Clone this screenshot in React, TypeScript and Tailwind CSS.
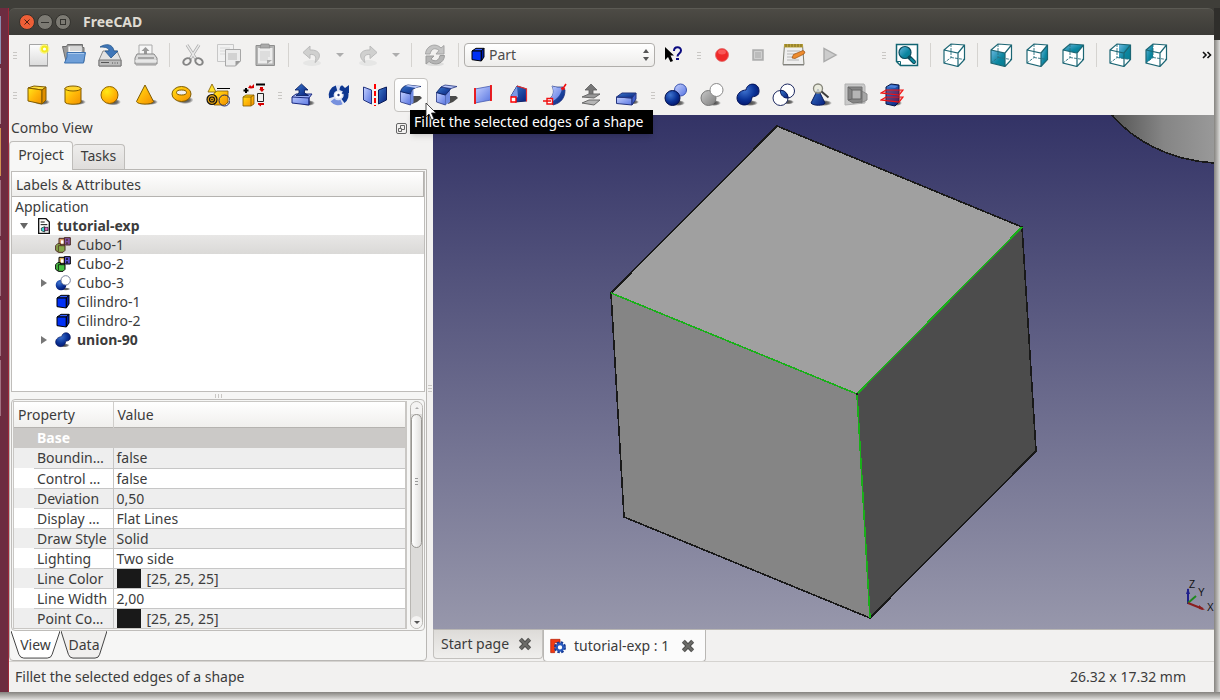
import type { ReactNode } from "react";
import clsx from "clsx";

interface IconProps {
  children: ReactNode;
  size?: "sm" | "md";
}

function Icon({ children, size = "md" }: IconProps) {
  return (
    <svg
      viewBox="0 0 24 24"
      aria-hidden="true"
      className={clsx("block shrink-0", size === "sm" ? "h-4 w-4" : "h-6 w-6")}
    >
      {children}
    </svg>
  );
}

// Gradients shared by every icon on the page
function IconDefs() {
  return (
    <svg className="absolute h-0 w-0" aria-hidden="true">
      <defs>
        <linearGradient id="gold" x1="0" y1="0" x2="1" y2="1">
          <stop offset="0" stopColor="#ffe81a" />
          <stop offset="0.5" stopColor="#ffb608" />
          <stop offset="1" stopColor="#f09000" />
        </linearGradient>
        <radialGradient id="goldBall" cx="0.35" cy="0.3" r="0.7">
          <stop offset="0" stopColor="#ffe916" />
          <stop offset="1" stopColor="#ffa000" />
        </radialGradient>
        <radialGradient id="blueBall" cx="0.35" cy="0.3" r="0.75">
          <stop offset="0" stopColor="#3f74d0" />
          <stop offset="0.6" stopColor="#0b3397" />
          <stop offset="1" stopColor="#03146a" />
        </radialGradient>
        <linearGradient id="blueDark" x1="0" y1="0" x2="1" y2="1">
          <stop offset="0" stopColor="#3a78cc" />
          <stop offset="1" stopColor="#061f7d" />
        </linearGradient>
        <linearGradient id="blueLight" x1="0" y1="0" x2="1" y2="1">
          <stop offset="0" stopColor="#c6d2ff" />
          <stop offset="1" stopColor="#5673e0" />
        </linearGradient>
        <linearGradient id="teal" x1="0" y1="0" x2="1" y2="1">
          <stop offset="0" stopColor="#6cb8e0" />
          <stop offset="0.6" stopColor="#0b86a0" />
          <stop offset="1" stopColor="#087c90" />
        </linearGradient>
        <linearGradient id="paper" x1="0" y1="0" x2="0" y2="1">
          <stop offset="0" stopColor="#fdfdfd" />
          <stop offset="1" stopColor="#dcdcdc" />
        </linearGradient>
        <linearGradient id="grey" x1="0" y1="0" x2="1" y2="1">
          <stop offset="0" stopColor="#c8c8c8" />
          <stop offset="1" stopColor="#7d7d7d" />
        </linearGradient>
        <radialGradient id="shade">
          <stop offset="0" stopColor="#222" stopOpacity="0.85" />
          <stop offset="0.6" stopColor="#222" stopOpacity="0.6" />
          <stop offset="1" stopColor="#222" stopOpacity="0" />
        </radialGradient>
        <linearGradient id="sky" x1="0" y1="0" x2="0" y2="1">
          <stop offset="0" stopColor="#333366" />
          <stop offset="1" stopColor="#9797ab" />
        </linearGradient>
        <linearGradient id="cylinder" gradientUnits="userSpaceOnUse" x1="680" y1="0" x2="781" y2="0">
          <stop offset="0" stopColor="#555" />
          <stop offset="0.5" stopColor="#858585" />
          <stop offset="1" stopColor="#999" />
        </linearGradient>
      </defs>
    </svg>
  );
}

/* ─── Standard file / edit icons ─── */

const newIcon = (
  <Icon>
    <path d="M3.5 1.5h18v21h-18z" fill="url(#paper)" stroke="#a5a5a5" />
    <path d="M3 23h19" stroke="#888" />
    <circle cx="18.5" cy="6" r="5" fill="#fff64a" opacity="0.6" />
    <circle cx="18.5" cy="6" r="3.4" fill="#f3ea1c" />
    <circle cx="18.5" cy="6" r="1.6" fill="#fffff0" />
  </Icon>
);

const openIcon = (
  <Icon>
    <path d="M.5 3.5h4l1-2h15v3H22v14H4z" fill="#9a9a9a" stroke="#6d6d6d" />
    <path d="M6 3h14v8H6z" fill="#f5f5f5" stroke="#999" strokeWidth="0.7" />
    <path d="M8 5h11M8 7h11" stroke="#aaa" strokeWidth="0.8" />
    <path d="M5 9.500h18.500l-2 10.500H2.500L5 14z" fill="#6f9fd8" stroke="#3c70ae" />
    <path d="M6 10.500h16" stroke="#a8c8ec" />
  </Icon>
);

const saveIcon = (
  <Icon>
    <path d="M5 8h14l4 9v6H1v-6z" fill="#e2e2e2" stroke="#8a8a8a" />
    <path d="M1 17h22v6H1z" fill="#bcbcbc" stroke="#777" />
    <path d="M3 19.500h8M14 20h1m1.500 0h1m1.500 0h1" stroke="#555" />
    <path d="M2 4C8 0 15 1 16 8h4l-7 7-6-7h4C11 5 8 4 2 4z" fill="#3f76b8" stroke="#27598f" strokeWidth="0.8" />
  </Icon>
);

const printIcon = (
  <Icon>
    <path d="M5 2h13v11H5z" fill="#f6f6f6" stroke="#aaa" />
    <path d="M11.500 4l4 4h-2.500v4h-3V8H7.500z" fill="#999" />
    <path d="M3 11h17l3 4v6H1v-6z" fill="#d9d9d9" stroke="#878787" />
    <path d="M4 14h16v2H4z" fill="#a5a5a5" />
    <path d="M1 18h22" stroke="#f6f6f6" />
    <path d="M2 22h20" stroke="#999" />
  </Icon>
);

const cutIcon = (
  <Icon>
    <path d="M6 2l9 14M18 2L9 16" stroke="#aaa" strokeWidth="3" />
    <path d="M6 2l9 14M18 2L9 16" stroke="#e9e9e9" strokeWidth="1.4" />
    <ellipse cx="6" cy="18.500" rx="4" ry="3" fill="none" stroke="#858585" strokeWidth="2" transform="rotate(-35 6 18.500)" />
    <ellipse cx="18" cy="18.500" rx="4" ry="3" fill="none" stroke="#858585" strokeWidth="2" transform="rotate(35 18 18.500)" />
  </Icon>
);

const copyIcon = (
  <Icon>
    <path d="M.5 1.500h16v17H.5z" fill="#f1f1f1" stroke="#c7c7c7" />
    <path d="M3 5h10M3 8h10M3 11h5" stroke="#d9d9d9" />
    <path d="M8.500 6.500h15V18l-5 5h-10z" fill="#ececec" stroke="#a7a7a7" />
    <path d="M11 10h9v7h-9z" fill="#d2d2d2" />
    <path d="M18.500 23v-5h5z" fill="#999" />
  </Icon>
);

const pasteIcon = (
  <Icon>
    <path d="M3 2.500h18.500v20H3z" fill="#b4b4b4" stroke="#8f8f8f" />
    <path d="M5 5h14.500v15.500H5z" fill="#ececec" />
    <path d="M8 1h8l1 4H7z" fill="#aaa" stroke="#888" strokeWidth="0.7" />
    <path d="M7 9h10M7 11h10M7 13h10M7 15h8M7 17h8" stroke="#cecece" />
    <path d="M14 21v-4h5z" fill="#aaa" />
  </Icon>
);

const undoIcon = (
  <Icon>
    <ellipse cx="12" cy="20" rx="9" ry="3" fill="#e6e6e5" />
    <path d="M10 3L3 9.500l7 6v-4c5-.5 7 2 5 8 7-5 6-13-5-12.500z" fill="#d0d0cf" stroke="#bbb" />
  </Icon>
);

const redoIcon = (
  <Icon>
    <ellipse cx="12" cy="20" rx="9" ry="3" fill="#e6e6e5" />
    <path d="M14 3l7 6.500-7 6v-4c-5-.5-7 2-5 8C2 14.500 3 6.500 14 7z" fill="#d0d0cf" stroke="#bbb" />
  </Icon>
);

const refreshIcon = (
  <Icon>
    <ellipse cx="12" cy="21" rx="9" ry="2" fill="#dededd" />
    <path d="M2.500 11C3 3 12-1 18 5l3-2.500V11h-8l3-3.500C12 4 8 6 7 11z" fill="#c4c4c4" stroke="#a5a5a5" />
    <path d="M21.500 12.500c-.5 8-9 11-15.500 6l-3 2.500v-8h8l-3 3c4 3.500 8 1.500 9-3.500z" fill="#b5b5b5" stroke="#9c9c9c" />
  </Icon>
);

const whatsThisIcon = (
  <Icon>
    <path d="M4 4v13l3-3 2.500 5 2.500-1-2.500-5.500H13z" fill="#000" />
    <path d="M13 8c0-5 7-5 7-.5 0 3-3.500 3-3.500 6M15 16h3" fill="none" stroke="#0b0b80" strokeWidth="2" />
  </Icon>
);

const recordIcon = (
  <Icon>
    <circle cx="12" cy="12" r="6.500" fill="#ef2929" stroke="#e06a6a" strokeWidth="0.8" />
    <ellipse cx="12" cy="9" rx="4" ry="2.500" fill="#ff6b6b" opacity="0.7" />
  </Icon>
);

const stopIcon = (
  <Icon>
    <path d="M7 7h10v10H7z" fill="#b9b9b9" stroke="#adadad" strokeWidth="1.500" />
    <path d="M8.500 8.500h7v7h-7z" fill="#bcbcbc" stroke="#d0d0d0" />
  </Icon>
);

const macroIcon = (
  <Icon>
    <path d="M2.500 2h18l1.500 19.500H1z" fill="#efefef" stroke="#7c7c70" />
    <path d="M2 1h19v3.500H2z" fill="#b9a23c" />
    <path d="M4 1v3m3-3v3m3-3v3m3-3v3m3-3v3m3-3v3" stroke="#6f5d15" strokeWidth="0.8" />
    <path d="M5 8h13M5 11h9M5 14h7M5 17h12" stroke="#b5b5b5" />
    <path d="M10 15l1.500-3.500L21 7.500l2 1.500-1 2-9 4.500z" fill="#ee8b2d" stroke="#985013" strokeWidth="0.7" />
    <path d="M1 22h21" stroke="#888" />
  </Icon>
);

const playIcon = (
  <Icon>
    <path d="M6 5.500v13L18 12z" fill="#ccc" stroke="#aaa" strokeWidth="1.400" />
  </Icon>
);

const fitIcon = (
  <Icon>
    <path d="M1.500 1.500h21v21h-17l-4-4z" fill="#fff" stroke="#126673" strokeWidth="1.500" />
    <path d="M1.500 18.500h4v4" fill="none" stroke="#126673" />
    <circle cx="10" cy="9.500" r="6" fill="url(#teal)" stroke="#0b4c5c" strokeWidth="1.200" />
    <path d="M14.500 14.500l4.500 4.500" stroke="#0b4c5c" strokeWidth="4" strokeLinecap="round" />
    <path d="M16 16l3 3" stroke="#0f8ca0" strokeWidth="2" strokeLinecap="round" />
  </Icon>
);

const CUBE_FACES = {
  none: "",
  front: "M2 7l14 3v13.500L2 20z",
  right: "M16 10l6.500-8v14.500L16 23.500z",
  top: "M2 7l7-6 13.500 1L16 10z",
  rear: "M11 1l11.500 1v14.500L11 15z",
  left: "M2 7l7-6v13.500L2 20z",
};

function ViewCube({ face }: { face: keyof typeof CUBE_FACES }) {
  return (
    <Icon>
      <path d="M2 7l7-6 13.500 1v14.500L16 23.500 2 20z" fill="#fff" />
      <path d={CUBE_FACES[face]} fill="url(#teal)" />
      <path d="M9 1v13.500L2 20M9 14.500l13.500 2" fill="none" stroke="#2b7180" strokeWidth="0.900" strokeDasharray="3 1" />
      <path d="M2 7l7-6 13.500 1v14.500L16 23.500 2 20zM2 7l14 3 6.500-8M16 10v13.500" fill="none" stroke="#1c6674" strokeWidth="1.200" />
    </Icon>
  );
}

/* ─── Part workbench icons ─── */

const boxIcon = (
  <Icon>
    <ellipse cx="16" cy="19" rx="8" ry="3" fill="url(#shade)" />
    <path d="M2 5l6-2 12 1-4 3z" fill="#ffdc3a" stroke="#805b00" />
    <path d="M2 5l14 2v14L2 18z" fill="url(#gold)" stroke="#805b00" />
    <path d="M16 7l4-3v13l-4 4z" fill="#e08f00" stroke="#805b00" />
  </Icon>
);

const cylinderIcon = (
  <Icon>
    <ellipse cx="16" cy="19" rx="8" ry="3" fill="url(#shade)" />
    <path d="M3 5v14c0 3 16 3 16 0V5" fill="url(#gold)" stroke="#805b00" />
    <ellipse cx="11" cy="5.500" rx="8" ry="2.500" fill="#ffd52e" stroke="#805b00" />
  </Icon>
);

const sphereIcon = (
  <Icon>
    <ellipse cx="15" cy="19" rx="8" ry="3.500" fill="url(#shade)" />
    <circle cx="11.500" cy="12" r="8.500" fill="url(#goldBall)" stroke="#906500" />
  </Icon>
);

const coneIcon = (
  <Icon>
    <ellipse cx="16" cy="19" rx="8" ry="3" fill="url(#shade)" />
    <path d="M11 2L2.500 18.500c1 3.500 16 3.500 17 0z" fill="url(#gold)" stroke="#805b00" />
  </Icon>
);

const torusIcon = (
  <Icon>
    <ellipse cx="15" cy="17" rx="8.500" ry="4" fill="url(#shade)" />
    <ellipse cx="11.500" cy="11" rx="9.500" ry="7.500" fill="url(#gold)" stroke="#805b00" />
    <ellipse cx="11.500" cy="9.500" rx="5" ry="2.500" fill="#f2f1f0" stroke="#805b00" />
  </Icon>
);

const primitivesIcon = (
  <Icon>
    <ellipse cx="18" cy="19" rx="6" ry="3" fill="url(#shade)" />
    <path d="M11 5.500h13" stroke="#000" />
    <path d="M8 10l3-2h11v11l-3 3H8z" fill="url(#gold)" stroke="#805b00" strokeWidth="0.800" />
    <path d="M6 1L2 9h8z" fill="#ffe02a" stroke="#805b00" strokeWidth="0.800" />
    <circle cx="6" cy="16.500" r="5" fill="#e0a010" stroke="#111" strokeWidth="1.200" />
    <circle cx="6" cy="16.500" r="2.500" fill="none" stroke="#111" strokeWidth="1.200" />
    <circle cx="6" cy="16.500" r="0.800" fill="#111" />
    <circle cx="18.500" cy="17.500" r="5.500" fill="none" stroke="#1d2466" />
  </Icon>
);

const shapeBuilderIcon = (
  <Icon>
    <path d="M1 14l3-2h8v9l-3 2H1z" fill="url(#gold)" stroke="#805b00" strokeWidth="0.800" />
    <path d="M1 14h8v9M9 14l3-2" fill="none" stroke="#805b00" strokeWidth="0.800" />
    <path d="M4 5v5M1.500 7.500h5" stroke="#000" strokeWidth="2" />
    <path d="M14 1.500h9" stroke="#000" strokeWidth="2" />
    <path d="M6 5l2-3 1.500 1.500L12 1v4l-3 .5zM18 4h3v2h1.500L20 9l-3-3h1zM16 20h6v2h-3v1.500l-3-2z" fill="#d90000" />
    <path d="M15.500 10.500h6v8h-6z" fill="none" stroke="#222" />
  </Icon>
);

const extrudeIcon = (
  <Icon>
    <ellipse cx="17" cy="20" rx="7" ry="3" fill="url(#shade)" />
    <path d="M1 14l4-3h16l-3 4v7L1 20z" fill="url(#blueLight)" stroke="#1b2a80" />
    <path d="M1 14l17 1v7" fill="none" stroke="#1b2a80" />
    <path d="M10.500 1L17 7h-3.500v3l4 2.500H5L8 10V7H4z" fill="url(#blueDark)" stroke="#061a5c" strokeWidth="0.800" />
  </Icon>
);

const revolveIcon = (
  <Icon>
    <circle cx="11.500" cy="12" r="10" fill="#dfe4f4" />
    <path d="M4.500 14.500A7.500 7.500 0 0 1 9.500 5" fill="none" stroke="#0e3790" strokeWidth="5" />
    <path d="M18.500 9A7.500 7.500 0 0 1 16 18" fill="none" stroke="#0e3790" strokeWidth="5" />
    <path d="M5.500 17a7.500 7.500 0 0 0 9 2" fill="none" stroke="#7791de" strokeWidth="5" />
    <path d="M12.500 7c0-3 1.500-5 3-4.500L18 5l4-3v8l-8 1 2-2.500z" fill="#0e3790" />
    <circle cx="11.500" cy="12" r="3.500" fill="#fff" />
    <circle cx="11.500" cy="12" r="1.200" fill="#26377c" />
  </Icon>
);

const mirrorIcon = (
  <Icon>
    <path d="M.500 4l8 3v14l-8-4z" fill="url(#blueLight)" stroke="#23347f" />
    <path d="M23.500 4l-8 3v14l8-4z" fill="url(#blueDark)" stroke="#0b1c58" />
    <path d="M12 1v22" stroke="#f00" strokeWidth="2" strokeDasharray="5 2" />
  </Icon>
);

const filletIcon = (
  <Icon>
    <path d="M14 13h7l2 2-5 4-5 2z" fill="#4a4a4a" />
    <path d="M1.500 8.500l10 2.500v11l-10-3z" fill="url(#blueLight)" stroke="#23347f" strokeWidth="0.800" />
    <path d="M11.500 11c0-2 1-3 3-4v12.500l-3 2.500z" fill="#6f8ae2" />
    <path d="M1.500 8.500C2.500 5 5 2.500 9 2l13 1.500c-6 .5-10 3-10.500 7.500z" fill="url(#blueDark)" stroke="#061a5c" strokeWidth="0.800" />
    <path d="M9 2l13 1.500c-2.500.3-4 .8-5.500 1.500L6 3z" fill="#b9c8fa" />
  </Icon>
);

const chamferIcon = (
  <Icon>
    <path d="M14 13h7l2 2-5 4-5 2z" fill="#4a4a4a" />
    <path d="M1.500 9.500l9 2.500v10l-9-3z" fill="url(#blueLight)" stroke="#23347f" strokeWidth="0.800" />
    <path d="M10.500 12L15 6v13l-4.500 3z" fill="#6f8ae2" />
    <path d="M1.500 9.500L6 4l10 1.500L10.500 12z" fill="url(#blueDark)" stroke="#061a5c" strokeWidth="0.800" />
    <path d="M6 4l4-2 12 1.500-6 2z" fill="#b9c8fa" stroke="#23347f" strokeWidth="0.800" />
  </Icon>
);

const ruledIcon = (
  <Icon>
    <path d="M4 6l16-3v14L4 20z" fill="url(#blueLight)" stroke="#4459b0" strokeWidth="0.800" />
    <path d="M4 5v16M20 2v16" stroke="#f01010" strokeWidth="1.800" />
  </Icon>
);

const loftIcon = (
  <Icon>
    <path d="M4 13L10 3l9.500 3v12L8 19z" fill="url(#blueDark)" stroke="#13236b" />
    <path d="M4 13L10 3l1 11-2 1z" fill="#7b98e6" />
    <path d="M10 3l9.500 3v12.500" fill="none" stroke="#e63030" strokeWidth="1.200" />
    <path d="M4 14h5v5H4z" fill="#fff" stroke="#f00" strokeWidth="1.400" />
  </Icon>
);

const sweepIcon = (
  <Icon>
    <path d="M9 3c4 1.500 8 1 11 1l2 3c0 8-4 13-12 15l-5-5c5-3 7-8 4-14z" fill="url(#blueDark)" stroke="#23347f" strokeWidth="0.800" />
    <path d="M9 3c4 1.500 7 2 10 1 0 6-4 12-11 15l-3-2c5-3 7-8 4-14z" fill="url(#blueLight)" />
    <path d="M4 15.500h5.500V21H4z" fill="#fff" stroke="#f01010" strokeWidth="1.400" />
    <path d="M0 18h8M19 7l2-3 2-3M18 5l4 1" fill="none" stroke="#f01010" strokeWidth="1.600" />
  </Icon>
);

const offsetIcon = (
  <Icon>
    <path d="M12 1l6 6h-4v6h-4V7H6z" fill="#777" stroke="#5d5d5d" strokeWidth="0.800" />
    <path d="M3 14l7-3h11l-6 4z" fill="#999" stroke="#696969" />
    <path d="M3 20l7-3h11l-6 5z" fill="#b5b5b5" stroke="#696969" />
  </Icon>
);

const thicknessIcon = (
  <Icon>
    <ellipse cx="18" cy="19" rx="6" ry="2.500" fill="url(#shade)" />
    <path d="M1.500 14l15.500 1v7L1.500 20.500z" fill="url(#blueLight)" stroke="#23347f" />
    <path d="M1.500 14L7 10h14l-4 5z" fill="url(#blueDark)" stroke="#23347f" />
    <path d="M21 10v6l-4 6v-7z" fill="#4260cc" stroke="#23347f" />
  </Icon>
);

const booleanIcon = (
  <Icon>
    <ellipse cx="14" cy="20" rx="7" ry="3" fill="url(#shade)" />
    <circle cx="16.500" cy="7" r="6" fill="url(#blueLight)" stroke="#3b54b0" />
    <circle cx="8.500" cy="15" r="7.500" fill="url(#blueBall)" stroke="#03104d" />
  </Icon>
);

const booleanCutIcon = (
  <Icon>
    <ellipse cx="14" cy="20" rx="7" ry="3" fill="url(#shade)" />
    <circle cx="8.500" cy="15" r="7.500" fill="url(#grey)" stroke="#777" />
    <circle cx="16.500" cy="7" r="6.500" fill="#fff" stroke="#8a8a8a" />
  </Icon>
);

const unionShape = (
  <>
    <ellipse cx="14" cy="20" rx="8" ry="3" fill="url(#shade)" />
    <path d="M10 7C11-1 23-1 23 8c0 4-2 5-7 6-.500 11-15 10-15 1 0-5 5-8 9-8z" fill="url(#blueBall)" stroke="#04145a" />
  </>
);

const unionIcon = <Icon>{unionShape}</Icon>;

const commonIcon = (
  <Icon>
    <ellipse cx="16" cy="19" rx="6" ry="2.500" fill="url(#shade)" />
    <circle cx="15.500" cy="8" r="7" fill="#fff" stroke="#1c2860" />
    <circle cx="8.500" cy="15" r="7.500" fill="#fff" stroke="#1c2860" />
    <path d="M8.500 7.500c4-.500 7.500 3 7.500 7.500-4 .500-8-3-7.500-7.500z" fill="url(#blueDark)" stroke="#0b1a60" />
  </Icon>
);

const checkGeometryIcon = (
  <Icon>
    <ellipse cx="16" cy="20" rx="8" ry="3" fill="url(#shade)" />
    <path d="M10 6L3 20c2 3 13 3 14 0z" fill="url(#blueDark)" stroke="#071a5a" />
    <circle cx="10" cy="5.500" r="4.500" fill="#e6e8d8" fillOpacity="0.800" stroke="#86867a" strokeWidth="1.300" />
    <path d="M13.500 8.500l7 6" stroke="#3d3d3d" strokeWidth="2" />
  </Icon>
);

const sectionIcon = (
  <Icon>
    <path d="M1 1h19l1 2v17L1 22z" fill="#c9c9c9" stroke="#b0b0b0" />
    <path d="M16 7l7 4v6l-6 3z" fill="#a5a5a5" stroke="#8a8a8a" />
    <path d="M4 4h14v15l-9 1-5-3z" fill="#858585" stroke="#707070" />
    <path d="M8 7h9v9H8z" fill="#b5b5b5" stroke="#666" />
    <path d="M4 4l4 3M4 17l4-1" stroke="#666" />
  </Icon>
);

const crossSectionsIcon = (
  <Icon>
    <ellipse cx="16" cy="20" rx="6" ry="3" fill="url(#shade)" />
    <path d="M6 4l5-3 8 1v17l-4 4-9-2z" fill="url(#blueDark)" stroke="#071545" />
    <path d="M1 10l5-3h17l-4 5zM1 17l5-3h17l-4 5z" fill="#e01515" fillOpacity="0.350" stroke="#f21212" strokeWidth="1.200" />
    <path d="M7 4l4-2 7 1-3 2z" fill="#4a7fd8" />
  </Icon>
);

/* ─── Tree and tab icons ─── */

const solidCube = (
  <>
    <path d="M3 6l6-4h12l-4 4z" fill="#3460ff" stroke="#000" strokeWidth="1.500" />
    <path d="M3 6h14v15L3 19z" fill="#0030f5" stroke="#000" strokeWidth="1.500" />
    <path d="M17 6l4-4v13l-4 6z" fill="#001fa8" stroke="#000" strokeWidth="1.500" />
  </>
);

const documentIcon = (
  <Icon size="sm">
    <path d="M4 1h11l5 5v17H4z" fill="#fff" stroke="#111" strokeWidth="2" />
    <path d="M7 6h6M7 10h10" stroke="#111" strokeWidth="1.500" />
    <path d="M8 15l5-2v8l-5-2z" fill="#40d8d8" stroke="#111" />
    <path d="M13 14h5v5h-5z" fill="#d860c8" stroke="#111" />
  </Icon>
);

function MeshIcon({ selected }: { selected?: boolean }) {
  const [green, orange, violet, line] = selected
    ? ["#86a94a", "#dd9560", "#8252a0", "#4b2a20"]
    : ["#49c244", "#e3b35c", "#5a50d0", "#000"];
  return (
    <Icon size="sm">
      <path d="M6 2h9v9H6z" fill={orange} stroke={line} strokeWidth="1.500" />
      <path d="M9 5h4v5H9z" fill="#fff" />
      <path d="M1 13l3-3h4l1 3h6v7l-3 3H5l-4-3z" fill={green} stroke={line} strokeWidth="1.500" />
      <path d="M5 13v9M5 13h4" stroke={line} strokeWidth="1.200" />
      <path d="M14 1h9v11h-9z" fill={violet} stroke={line} strokeWidth="1.500" />
      <path d="M18 3v3m0 2v3" stroke={line} strokeWidth="2" />
    </Icon>
  );
}

const smallCut = (
  <Icon size="sm">
    <ellipse cx="16" cy="21" rx="7" ry="2.500" fill="url(#shade)" />
    <circle cx="9" cy="15" r="8" fill="url(#blueBall)" />
    <circle cx="16" cy="8" r="7" fill="#fff" stroke="#77809c" strokeWidth="1.500" />
  </Icon>
);

const freecadIcon = (
  <Icon size="sm">
    <path d="M1 2h14v5H7v3h5v4H7v8H1z" fill="#f03a12" stroke="#b01c06" />
    <circle cx="15" cy="14" r="7" fill="none" stroke="#153a94" strokeWidth="4" strokeDasharray="3.500 2" />
    <circle cx="15" cy="14" r="5" fill="#fff" stroke="#2758bd" strokeWidth="3.500" />
  </Icon>
);

/* ─── Toolbars ─── */

interface Tool {
  label: string;
  icon: ReactNode;
}

const FILE_TOOLS: Tool[] = [
  { label: "New", icon: newIcon },
  { label: "Open", icon: openIcon },
  { label: "Save", icon: saveIcon },
  { label: "Print", icon: printIcon },
];

const EDIT_TOOLS: Tool[] = [
  { label: "Cut", icon: cutIcon },
  { label: "Copy", icon: copyIcon },
  { label: "Paste", icon: pasteIcon },
];

const MACRO_TOOLS: Tool[] = [
  { label: "Record macro", icon: recordIcon },
  { label: "Stop recording", icon: stopIcon },
  { label: "Macros", icon: macroIcon },
  { label: "Execute macro", icon: playIcon },
];

const VIEW_TOOLS: Tool[] = [
  { label: "Front view", icon: <ViewCube face="front" /> },
  { label: "Right view", icon: <ViewCube face="right" /> },
  { label: "Top view", icon: <ViewCube face="top" /> },
];

const REAR_VIEW_TOOLS: Tool[] = [
  { label: "Rear view", icon: <ViewCube face="rear" /> },
  { label: "Left view", icon: <ViewCube face="left" /> },
];

const SOLID_TOOLS: Tool[] = [
  { label: "Box", icon: boxIcon },
  { label: "Cylinder", icon: cylinderIcon },
  { label: "Sphere", icon: sphereIcon },
  { label: "Cone", icon: coneIcon },
  { label: "Torus", icon: torusIcon },
  { label: "Create primitives", icon: primitivesIcon },
  { label: "Shape builder", icon: shapeBuilderIcon },
];

const SWEEP_TOOLS: Tool[] = [
  { label: "Extrude", icon: extrudeIcon },
  { label: "Revolve", icon: revolveIcon },
  { label: "Mirror", icon: mirrorIcon },
];

const SURFACE_TOOLS: Tool[] = [
  { label: "Chamfer", icon: chamferIcon },
  { label: "Ruled surface", icon: ruledIcon },
  { label: "Loft", icon: loftIcon },
  { label: "Sweep", icon: sweepIcon },
  { label: "Offset", icon: offsetIcon },
  { label: "Thickness", icon: thicknessIcon },
];

const BOOLEAN_TOOLS: Tool[] = [
  { label: "Boolean", icon: booleanIcon },
  { label: "Cut shapes", icon: booleanCutIcon },
  { label: "Union", icon: unionIcon },
  { label: "Intersection", icon: commonIcon },
  { label: "Check geometry", icon: checkGeometryIcon },
  { label: "Section", icon: sectionIcon },
  { label: "Cross-sections", icon: crossSectionsIcon },
];

function Tools({ items }: { items: Tool[] }) {
  return (
    <>
      {items.map((t) => (
        <button key={t.label} aria-label={t.label} className="flex h-9 w-9 shrink-0 items-center justify-center">
          {t.icon}
        </button>
      ))}
    </>
  );
}

function Grip({ className }: { className?: string }) {
  return (
    <div className={clsx("flex w-[11px] shrink-0 flex-col items-center gap-0.5", className)}>
      <span className="h-px w-1 bg-[#c9c7c4]" />
      <span className="h-px w-1 bg-[#c9c7c4]" />
      <span className="h-px w-1 bg-[#c9c7c4]" />
    </div>
  );
}

function Separator() {
  return <div className="mx-[5px] h-6 w-px shrink-0 bg-[#d5d3d0]" />;
}

function DropArrow({ label }: { label: string }) {
  return (
    <button aria-label={label} className="flex h-9 w-5 shrink-0 items-center justify-center">
      <span className="border-x-4 border-t-4 border-x-transparent border-t-[#adadad]" />
    </button>
  );
}

function StandardToolbar() {
  return (
    <div className="flex h-10 items-center">
      <Grip />
      <Tools items={FILE_TOOLS} />
      <Separator />
      <Tools items={EDIT_TOOLS} />
      <Separator />
      <Tools items={[{ label: "Undo", icon: undoIcon }]} />
      <DropArrow label="Undo history" />
      <Tools items={[{ label: "Redo", icon: redoIcon }]} />
      <DropArrow label="Redo history" />
      <Separator />
      <Tools items={[{ label: "Refresh", icon: refreshIcon }]} />
      <Separator />
      <div className="relative w-[191px] shrink-0">
        <select
          aria-label="Workbench"
          className="block h-6 w-full appearance-none rounded border border-[#b0aeab] bg-linear-to-b from-white to-[#eeedeb] pl-6 text-sm leading-4 text-[#4c4c4c]"
        >
          <option>Part</option>
        </select>
        <span className="pointer-events-none absolute top-1 left-1.5">
          <Icon size="sm">{solidCube}</Icon>
        </span>
        <span className="pointer-events-none absolute top-1.5 right-1.5 flex flex-col gap-1">
          <span className="border-x-3 border-b-4 border-x-transparent border-b-[#555]" />
          <span className="border-x-3 border-t-4 border-x-transparent border-t-[#555]" />
        </span>
      </div>
      <Tools items={[{ label: "What's this?", icon: whatsThisIcon }]} />
      <Grip className="ml-0.5" />
      <Tools items={MACRO_TOOLS} />
      <Grip className="ml-[30px]" />
      <Tools items={[{ label: "Fit all", icon: fitIcon }]} />
      <Separator />
      <Tools items={[{ label: "Axonometric view", icon: <ViewCube face="none" /> }]} />
      <Separator />
      <Tools items={VIEW_TOOLS} />
      <Separator />
      <Tools items={REAR_VIEW_TOOLS} />
      <button aria-label="More tools" className="mr-0.5 ml-auto">
        <svg viewBox="0 0 10 8" className="h-2 w-2.5" fill="none" stroke="#111" strokeWidth="1.600" aria-hidden="true">
          <path d="M1 1l3 3-3 3M5.500 1l3 3-3 3" />
        </svg>
      </button>
    </div>
  );
}

function PartToolbar() {
  return (
    <div className="flex h-10 items-center">
      <Grip />
      <Tools items={SOLID_TOOLS} />
      <Grip className="ml-0.5" />
      <Tools items={SWEEP_TOOLS} />
      <div className="relative mx-px shrink-0">
        <button
          aria-label="Fillet"
          aria-describedby="fillet-tip"
          className="flex h-[34px] w-[34px] items-center justify-center rounded border border-[#c5c3c0] bg-linear-to-b from-white to-[#f7f7f6]"
        >
          {filletIcon}
        </button>
        <div
          id="fillet-tip"
          role="tooltip"
          className="absolute top-8 left-4 z-20 bg-black pr-2.5 pl-1 text-sm leading-6 whitespace-nowrap text-white shadow-md"
        >
          Fillet the selected edges of a shape
        </div>
        {/* mouse pointer */}
        <svg viewBox="0 0 12 19" className="absolute top-6 left-[31px] z-30 h-[19px] w-3" aria-hidden="true">
          <path d="M1 1v14l3-3 2.500 6 2.500-1-2.500-6H11z" fill="#fff" stroke="#222" strokeWidth="0.800" />
        </svg>
      </div>
      <Tools items={SURFACE_TOOLS} />
      <Grip className="ml-0.5" />
      <Tools items={BOOLEAN_TOOLS} />
    </div>
  );
}

/* ─── Combo View ─── */

interface TreeItem {
  name: string;
  icon: ReactNode;
  expandable?: boolean;
  selected?: boolean;
  bold?: boolean;
}

const TREE: TreeItem[] = [
  { name: "Cubo-1", icon: <MeshIcon selected />, selected: true },
  { name: "Cubo-2", icon: <MeshIcon /> },
  { name: "Cubo-3", icon: smallCut, expandable: true },
  { name: "Cilindro-1", icon: <Icon size="sm">{solidCube}</Icon> },
  { name: "Cilindro-2", icon: <Icon size="sm">{solidCube}</Icon> },
  { name: "union-90", icon: <Icon size="sm">{unionShape}</Icon>, expandable: true, bold: true },
];

interface Property {
  name: string;
  value: string;
  swatch?: boolean;
}

const PROPERTIES: Property[] = [
  { name: "Boundin…", value: "false" },
  { name: "Control …", value: "false" },
  { name: "Deviation", value: "0,50" },
  { name: "Display …", value: "Flat Lines" },
  { name: "Draw Style", value: "Solid" },
  { name: "Lighting", value: "Two side" },
  { name: "Line Color", value: "[25, 25, 25]", swatch: true },
  { name: "Line Width", value: "2,00" },
  { name: "Point Co…", value: "[25, 25, 25]", swatch: true },
];

function ModelTree() {
  return (
    <div className="flex min-h-0 flex-1 flex-col overflow-hidden border border-[#bfbdba] bg-white">
      <div className="h-[25px] shrink-0 border-r border-b border-[#b5b3b0] bg-linear-to-b from-white to-[#efeeec] px-1 leading-[26px]">
        Labels &amp; Attributes
      </div>
      <ul role="tree" className="leading-[19px]">
        <li role="treeitem" className="px-[3px]">
          Application
        </li>
        <li role="treeitem" aria-expanded="true" className="flex items-center pl-2 font-bold">
          <span className="mr-2 border-x-4 border-t-[6px] border-x-transparent border-t-[#666]" />
          {documentIcon}
          <span className="ml-[5px]">tutorial-exp</span>
        </li>
        {TREE.map((item) => (
          <li
            key={item.name}
            role="treeitem"
            aria-selected={item.selected ?? false}
            className={clsx(
              "flex items-center pl-[29px]",
              item.selected && "bg-linear-to-b from-[#e8e7e6] to-[#dad9d7]",
              item.bold && "font-bold"
            )}
          >
            <span className="flex w-3.5 shrink-0">
              {item.expandable && (
                <span className="border-y-4 border-l-[6px] border-y-transparent border-l-[#777]" />
              )}
            </span>
            {item.icon}
            <span className="ml-1.5">{item.name}</span>
          </li>
        ))}
      </ul>
    </div>
  );
}

function PropertyEditor() {
  return (
    <div className="flex shrink-0 rounded-sm border border-[#bfbdba] p-px">
      <div className="h-[228px] min-w-0 flex-1 overflow-hidden border border-r-2 border-[#c9c7c4] bg-white">
        <table className="w-full table-fixed border-collapse">
          <colgroup>
            <col className="w-5" />
            <col className="w-[79px]" />
            <col />
          </colgroup>
          <thead>
            <tr className="h-[25px] border-b border-[#b5b3b0] bg-linear-to-b from-white to-[#f0efed] text-left">
              <th colSpan={2} className="border-r border-[#d0cecb] p-0 pt-px pl-1 leading-6 font-normal">Property</th>
              <th className="p-0 pt-px pl-1 leading-6 font-normal">Value</th>
            </tr>
          </thead>
          <tbody>
            <tr className="h-5 bg-[#cbc9c7] text-left text-white">
              <td className="p-0" />
              <th colSpan={2} className="p-0 pl-[3px] leading-5 font-bold">Base</th>
            </tr>
            {PROPERTIES.map((p) => (
              <tr key={p.name} className="h-5 odd:bg-white even:bg-[#eeeeee]">
                <td className="p-0" />
                <td className="overflow-hidden border-r border-b border-[#c6c6c6] p-0 pl-[3px] leading-[19px] whitespace-nowrap">
                  {p.name}
                </td>
                <td className="border-b border-[#c6c6c6] p-0 pl-[3px] leading-[19px]">
                  <span className="flex items-center">
                    {p.swatch && <span className="mr-1.5 h-[19px] w-6 bg-[#191919]" />}
                    {p.value}
                  </span>
                </td>
              </tr>
            ))}
          </tbody>
        </table>
      </div>
      {/* scroll bar */}
      <div className="ml-[3px] flex w-[13px] flex-col overflow-hidden rounded-full border border-[#b8b6b2] bg-[#dcdbd9]">
        <button aria-label="Scroll up" className="flex h-3 shrink-0 items-center justify-center bg-[#f4f3f2]">
          <span className="border-x-2 border-b-2 border-x-transparent border-b-[#aaa]" />
        </button>
        <div className="flex h-[134px] shrink-0 flex-col items-center justify-center gap-0.5 rounded-full border border-[#989692] bg-linear-to-r from-white to-[#e2e1df]">
          <span className="h-px w-[3px] bg-[#999]" />
          <span className="h-px w-[3px] bg-[#999]" />
          <span className="h-px w-[3px] bg-[#999]" />
        </div>
        <button aria-label="Scroll down" className="mt-auto flex h-3 shrink-0 items-center justify-center rounded-t-full bg-[#f4f3f2]">
          <span className="border-x-3 border-t-3 border-x-transparent border-t-[#555]" />
        </button>
      </div>
    </div>
  );
}

function SlantTab({ label, active }: { label: string; active?: boolean }) {
  return (
    <button
      role="tab"
      aria-selected={active ?? false}
      className={clsx("relative text-center", active ? "h-7 w-[49px] leading-[26px]" : "h-7 w-[46px] leading-[26px]")}
    >
      <svg viewBox="0 0 50 30" preserveAspectRatio="none" className="absolute inset-0 h-full w-full" aria-hidden="true">
        <path
          d="M0 0l8 25q1.500 4 5 4h24q4 0 5-4l8-25"
          fill={active ? "#fff" : "#f0efee"}
          stroke="#444"
          vectorEffect="non-scaling-stroke"
        />
      </svg>
      <span className="relative">{label}</span>
    </button>
  );
}

function ComboView() {
  return (
    <aside className="flex w-[418px] shrink-0 flex-col">
      <div className="flex h-[26px] shrink-0 items-center justify-between pr-5 pl-0.5">
        <h2>Combo View</h2>
        <button aria-label="Float panel" className="h-[11px] w-[11px]">
          <svg viewBox="0 0 11 11" className="h-full w-full" fill="none" stroke="#666" aria-hidden="true">
            <rect x="0.500" y="0.500" width="10" height="10" rx="1.500" />
            <path d="M2.500 5.500h3v3h-3zM4.500 5V2.500h4v4H6" />
          </svg>
        </button>
      </div>
      <div role="tablist" className="flex h-7 shrink-0 items-end">
        <button role="tab" aria-selected="true" className="z-10 -mb-px flex h-[29px] w-16 justify-center rounded-t border border-b-0 border-[#bfbdba] bg-[#f7f7f6] leading-[26px]">
          Project
        </button>
        <button role="tab" aria-selected="false" className="flex h-[25px] w-[52px] justify-center rounded-t border border-b-0 border-l-0 border-[#bfbdba] bg-linear-to-b from-[#eeedec] to-[#dfdddb] leading-[22px]">
          Tasks
        </button>
      </div>
      <div className="flex min-h-0 flex-1 flex-col rounded-b border border-[#b9b7b4] bg-[#f6f6f5] p-px">
        <ModelTree />
        <div className="flex h-[7px] shrink-0 items-center justify-center gap-0.5">
          <span className="h-1 w-px bg-[#c9c7c4]" />
          <span className="h-1 w-px bg-[#c9c7c4]" />
          <span className="h-1 w-px bg-[#c9c7c4]" />
        </div>
        <PropertyEditor />
        <div role="tablist" className="flex h-7 shrink-0 gap-px">
          <SlantTab label="View" active />
          <SlantTab label="Data" />
        </div>
      </div>
    </aside>
  );
}

/* ─── 3D view ─── */

function Viewport() {
  return (
    <svg
      viewBox="0 0 781 514"
      preserveAspectRatio="xMaxYMid slice"
      role="img"
      aria-label="3D view of tutorial-exp"
      className="block min-h-0 w-full flex-1"
    >
      <rect width="781" height="514" fill="url(#sky)" />
      <path d="M679 0C700 25 735 45 781 48V0z" fill="url(#cylinder)" />
      <path d="M344 11l245 101-165 167-246-101z" fill="#a0a0a0" />
      <path d="M178 178l246 101 13 224-246-101z" fill="#858585" />
      <path d="M424 279l165-167 14 224-166 167z" fill="#4c4c4c" />
      <g fill="none" strokeWidth="1.600" shapeRendering="crispEdges">
        <path d="M679 0C700 25 735 45 781 48" stroke="#191919" />
        <path d="M178 178L344 11l245 101 14 224-166 167-246-101z" stroke="#191919" strokeLinejoin="round" />
        <path d="M178 178l246 101 165-167M424 279l13 224" stroke="#19af19" />
      </g>
      <path d="M423 278h2v2h-2z" fill="#191919" />
      {/* axis cross */}
      <path d="M755 489v-15" stroke="#1f1f8c" strokeWidth="2" />
      <path d="M753 479l2-6 2 6z" fill="#1f1f8c" />
      <path d="M755 488l8-7" stroke="#1e8a1e" strokeWidth="2" />
      <path d="M755 488l15 6" stroke="#8a1f1f" strokeWidth="2" />
      <path d="M766 490l6 5-6-1z" fill="#8a1f1f" />
      <g fontSize="10" fill="#111" className="font-[Liberation_Sans,sans-serif]">
        <text x="756" y="473">Z</text>
        <text x="765" y="481">Y</text>
        <text x="774" y="496">X</text>
      </g>
    </svg>
  );
}

function CloseMark() {
  return (
    <svg viewBox="0 0 12 12" className="h-3.5 w-3.5" aria-hidden="true">
      <path d="M2 2l8 8M10 2l-8 8" stroke="#4e4e4c" strokeWidth="3.600" />
      <path d="M2 2l8 8M10 2l-8 8" stroke="#6c6c69" strokeWidth="1.800" />
    </svg>
  );
}

function DocumentTabs() {
  return (
    <div role="tablist" className="flex h-8 shrink-0 items-start border-t border-[#b9b7b4]">
      <div className="flex h-[29px] w-[110px] items-center justify-between rounded-b border border-t-0 border-[#c3c1be] bg-linear-to-b from-[#dddbd8] to-[#f0efed] pr-2.5 pl-[7px]">
        <button role="tab" aria-selected="false">Start page</button>
        <button aria-label="Close Start page"><CloseMark /></button>
      </div>
      <div className="flex h-8 w-[163px] items-center justify-between rounded-b border border-t-0 border-[#b9b7b4] bg-[#fbfbfb] pr-2.5 pl-1.5">
        <button role="tab" aria-selected="true" className="flex items-center gap-2">
          {freecadIcon}
          tutorial-exp : 1
        </button>
        <button aria-label="Close tutorial-exp"><CloseMark /></button>
      </div>
    </div>
  );
}

function TitleBar() {
  return (
    <header className="flex h-[27px] shrink-0 items-center gap-0.5 rounded-t-md border-t border-[#5b5a54] bg-linear-to-b from-[#4d4b45] to-[#3c3b37] pl-2.5">
      <button aria-label="Close" className="flex h-4 w-4 items-center justify-center rounded-full border border-[#33322e] bg-[#ee5f37]">
        <svg viewBox="0 0 8 8" className="h-2 w-2" stroke="#4a1d10" aria-hidden="true">
          <path d="M1.500 1.500l5 5M6.500 1.500l-5 5" />
        </svg>
      </button>
      <button aria-label="Minimize" className="flex h-4 w-4 items-center justify-center rounded-full border border-[#33322e] bg-[#7c7a73]">
        <span className="h-px w-2 bg-[#33322e]" />
      </button>
      <button aria-label="Maximize" className="flex h-4 w-4 items-center justify-center rounded-full border border-[#33322e] bg-[#7c7a73]">
        <span className="h-1.5 w-1.5 border border-[#33322e]" />
      </button>
      <h1 className="ml-2.5 font-bold text-[#dfdbd2]">FreeCAD</h1>
    </header>
  );
}

export default function App() {
  return (
    <div className="flex h-screen flex-col overflow-hidden bg-[#3f3e39] font-['Noto_Sans',sans-serif] text-sm text-[#3c3c3c]">
      <IconDefs />
      <div className="h-2 shrink-0" />
      <div className="flex min-h-0 flex-1">
        {/* launcher edge behind the window */}
        <div className="flex w-[9px] shrink-0 border-r border-[#a02838] bg-[#6d2c40]">
          <div className="flex w-px flex-col gap-1 pt-2">
            <span className="h-12 bg-[#8a8eb0]" />
            <span className="h-14 bg-[#b08a95]" />
            <span className="h-12 bg-[#d09050]" />
            <span className="h-14 bg-[#a07080]" />
            <span className="h-14 bg-[#a07080]" />
            <span className="h-14 bg-[#a07080]" />
            <span className="h-14 bg-[#a07080]" />
          </div>
        </div>
        <div className="flex min-w-0 flex-1 flex-col">
          <TitleBar />
          <div className="shrink-0 bg-[#f2f1f0]">
            <StandardToolbar />
            <PartToolbar />
          </div>
          <div className="flex min-h-0 flex-1 bg-[#f2f1f0]">
            <ComboView />
            <div className="flex w-1.5 shrink-0 flex-col items-center justify-center gap-0.5">
              <span className="h-px w-1 bg-[#c9c7c4]" />
              <span className="h-px w-1 bg-[#c9c7c4]" />
              <span className="h-px w-1 bg-[#c9c7c4]" />
            </div>
            <main className="flex min-w-0 flex-1 flex-col">
              <Viewport />
              <DocumentTabs />
            </main>
          </div>
          <footer className="flex h-[31px] shrink-0 items-center justify-between border-t border-[#d5d3d0] bg-[#f2f1f0] pr-7 pl-1.5">
            <span>Fillet the selected edges of a shape</span>
            <span>26.32 x 17.32 mm</span>
          </footer>
        </div>
        <div className="flex w-1.5 shrink-0 flex-col bg-linear-to-r from-[#85837f] to-[#dddcda]">
          <div className="h-8 bg-[#2f2e2b]" />
        </div>
      </div>
      <div className="h-2 shrink-0 bg-linear-to-b from-[#85837f] to-[#e5e4e2]" />
    </div>
  );
}
